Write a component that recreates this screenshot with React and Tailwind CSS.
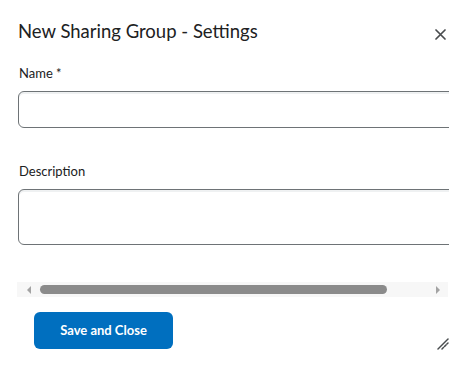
import React from 'react';

const CloseIcon = () => (
    <svg width="11" height="11" viewBox="0 0 11 11" className="block">
        <path d="M1 1 L10 10 M10 1 L1 10" stroke="#494c4e" strokeWidth="1.7" strokeLinecap="round" />
    </svg>
);

const ResizeIcon = () => (
    <svg width="12" height="12" viewBox="0 0 12 12" className="block">
        <path d="M1 11 L11 1" stroke="#494c4e" strokeWidth="1.5" strokeLinecap="round" />
        <path d="M5 11 L11 5" stroke="#494c4e" strokeWidth="1.5" strokeLinecap="round" strokeDasharray="2 1.5" />
    </svg>
);

const App = () => {
    return (
        <div className="w-[471px] h-[367px] bg-white overflow-hidden" style={{ fontFamily: 'Lato, "Open Sans", sans-serif' }}>
            {/* Header */}
            <div className="flex items-start justify-between pt-[19px] pl-[18px] pr-[25px]">
                <h1 className="text-[18.5px] leading-[24px] text-[#202122] font-normal">New Sharing Group - Settings</h1>
                <button className="mt-[10px]">
                    <CloseIcon />
                </button>
            </div>

            {/* Form, clipped on the right */}
            <div className="ml-[18px] w-[431px] overflow-hidden">
                <label className="block mt-[22px] text-[13px] leading-[16px] text-[#202122] pl-px">Name *</label>
                <div className="mt-[10px] w-[600px] h-[37px] rounded-[6px] border border-[#6e7376] shadow-[inset_0_2px_0_0_rgba(177,185,190,0.2)]"></div>

                <label className="block mt-[35px] text-[13px] leading-[16px] text-[#202122] pl-px">Description</label>
                <div className="mt-[10px] w-[600px] h-[56px] rounded-[6px] border border-[#6e7376] shadow-[inset_0_2px_0_0_rgba(177,185,190,0.2)]"></div>
            </div>

            {/* Horizontal scrollbar */}
            <div className="mt-[37px] ml-[17px] w-[431px] h-[15px] bg-[#f7f7f7] flex items-center">
                <div className="w-[23px] flex justify-center">
                    <div className="w-0 h-0 border-y-[4px] border-y-transparent border-r-[4px] border-r-[#a3a3a3]"></div>
                </div>
                <div className="w-[347px] h-[9px] rounded-full bg-[#8b8b8b]"></div>
                <div className="flex-1 flex justify-end pr-[8px]">
                    <div className="w-0 h-0 border-y-[4px] border-y-transparent border-l-[4px] border-l-[#a3a3a3]"></div>
                </div>
            </div>

            {/* Footer */}
            <div className="flex items-end justify-between mt-[15px] pl-[34px] pr-[22px]">
                <button className="w-[139px] h-[37px] rounded-[6px] bg-[#006fbf] text-white text-[13px] font-bold">
                    Save and Close
                </button>
                <div className="mb-[-1px]">
                    <ResizeIcon />
                </div>
            </div>
        </div>
    );
};

export default App;
